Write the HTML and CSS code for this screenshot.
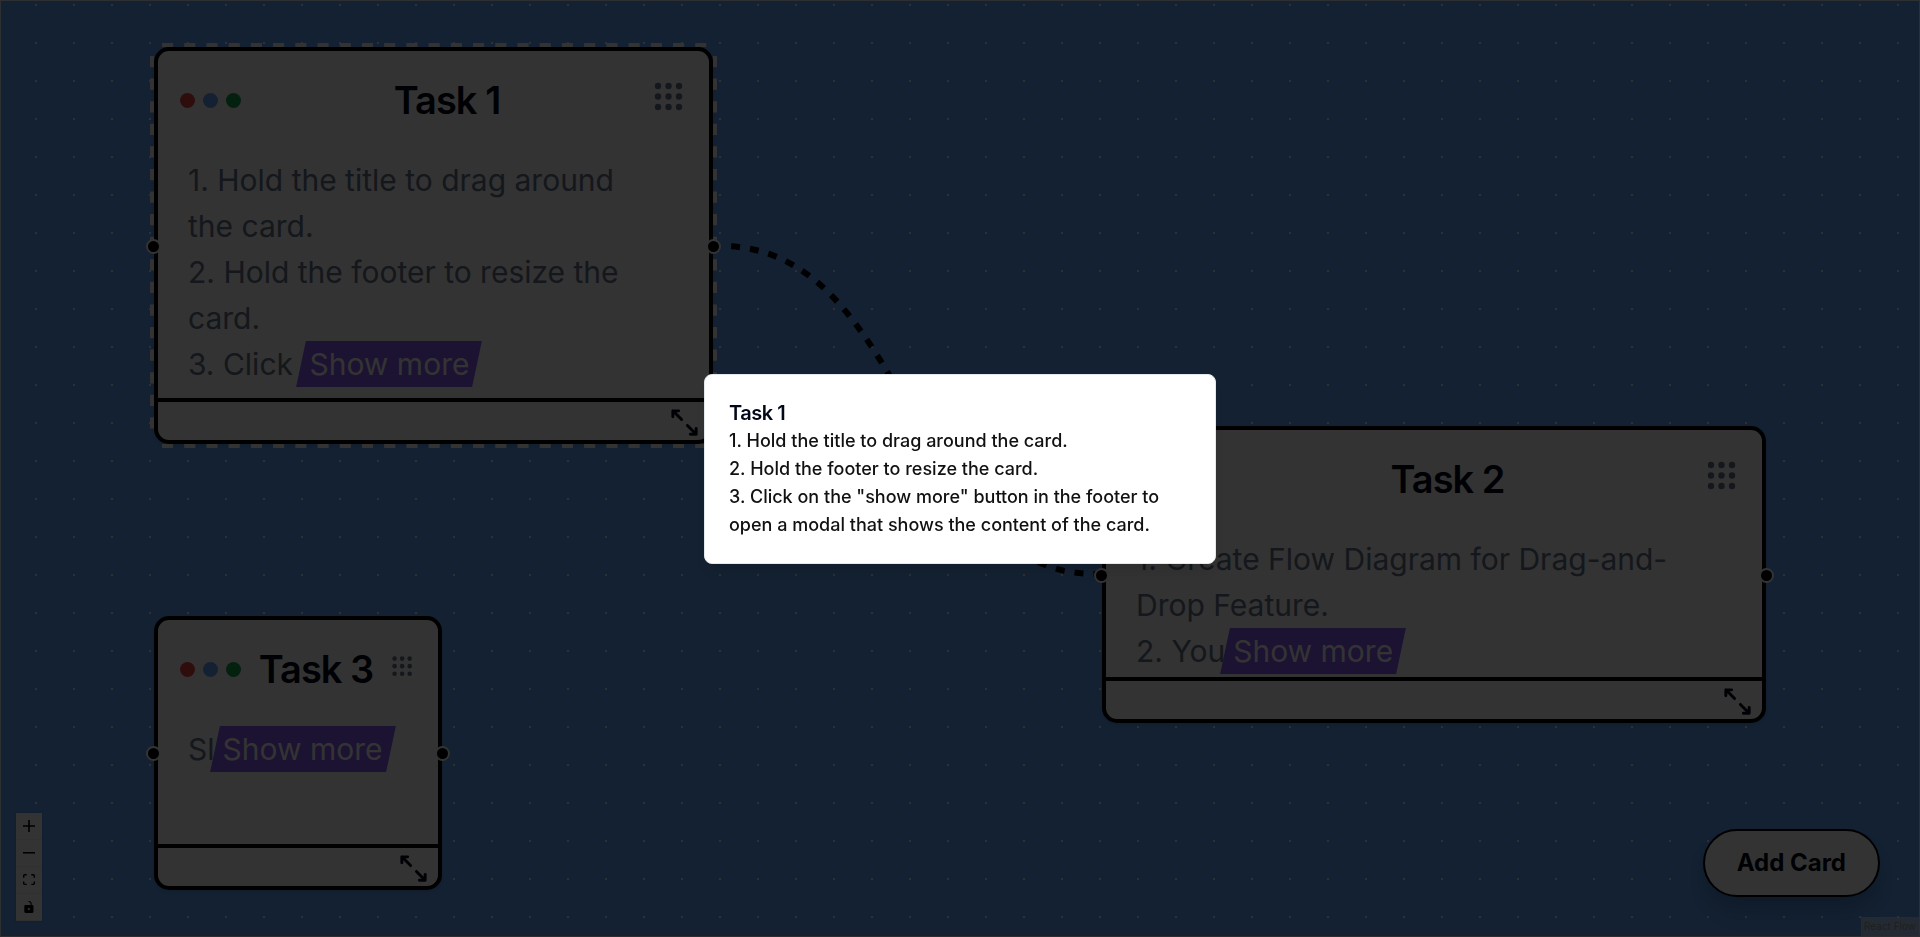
FILE: index.html
```html
<!DOCTYPE html>
<html lang="en">
<head>
<meta charset="utf-8">
<title>Task board</title>
<link rel="stylesheet" href="styles.css">
</head>
<body>
<svg class="sprite" aria-hidden="true">
  <symbol id="grip" viewBox="0 0 32 32">
    <g fill="currentColor"><circle cx="5" cy="5" r="3.2"/><circle cx="15.500" cy="5" r="3.2"/><circle cx="26" cy="5" r="3.2"/><circle cx="5" cy="15.500" r="3.2"/><circle cx="15.500" cy="15.500" r="3.2"/><circle cx="26" cy="15.500" r="3.2"/><circle cx="5" cy="26" r="3.2"/><circle cx="15.500" cy="26" r="3.2"/><circle cx="26" cy="26" r="3.2"/></g>
  </symbol>
  <symbol id="resize" viewBox="0 0 24 24">
    <path d="M16 20h4v-4M14 14l6 6M8 4H4v4M4 4l6 6" fill="none" stroke="currentColor" stroke-width="2" stroke-linecap="round" stroke-linejoin="round"/>
  </symbol>
</svg>

<main class="canvas">
  <svg class="edges" aria-hidden="true">
    <path d="M721 246C910 246 910 574 1095 574"/>
  </svg>

  <article class="card card-one">
    <svg class="selection" aria-hidden="true">
      <svg x="12" width="100%" height="100%" overflow="visible"><line class="dash-x" x1="0" y1="2" x2="96%" y2="2" pathLength="49"/></svg>
      <svg x="12" y="100%" width="100%" height="4" overflow="visible"><line class="dash-x" x1="0" y1="-2" x2="96%" y2="-2" pathLength="49"/></svg>
      <svg y="13" width="100%" height="100%" overflow="visible"><line class="dash-x" x1="2" y1="0" x2="2" y2="92%" pathLength="33"/></svg>
      <svg x="100%" y="13" width="4" height="100%" overflow="visible"><line class="dash-x" x1="-2" y1="0" x2="-2" y2="92%" pathLength="33"/></svg>
    </svg>
    <header class="card-head">
      <div class="lights"><span class="light red"></span><span class="light blue"></span><span class="light green"></span></div>
      <h2 class="card-title">Task 1</h2>
      <button class="grip" aria-label="Card menu"><svg><use href="#grip"/></svg></button>
    </header>
    <p class="card-text">1. Hold the title to drag around the card.<br>2. Hold the footer to resize the card.<br>3. Click <button class="more">Show more</button></p>
    <footer class="card-foot"><button class="resize" aria-label="Resize"><svg><use href="#resize"/></svg></button></footer>
    <span class="handle in"></span><span class="handle out"></span>
  </article>

  <article class="card card-two">
    <header class="card-head">
      <div class="lights"><span class="light red"></span><span class="light blue"></span><span class="light green"></span></div>
      <h2 class="card-title">Task 2</h2>
      <button class="grip" aria-label="Card menu"><svg><use href="#grip"/></svg></button>
    </header>
    <p class="card-text">1. Create Flow Diagram for Drag-and-Drop Feature.<br>2. You<button class="more">Show more</button></p>
    <footer class="card-foot"><button class="resize" aria-label="Resize"><svg><use href="#resize"/></svg></button></footer>
    <span class="handle in"></span><span class="handle out"></span>
  </article>

  <article class="card card-three">
    <header class="card-head">
      <div class="lights"><span class="light red"></span><span class="light blue"></span><span class="light green"></span></div>
      <h2 class="card-title">Task 3</h2>
      <button class="grip small" aria-label="Card menu"><svg><use href="#grip"/></svg></button>
    </header>
    <p class="card-text">Sl<button class="more">Show more</button></p>
    <footer class="card-foot"><button class="resize" aria-label="Resize"><svg><use href="#resize"/></svg></button></footer>
    <span class="handle in"></span><span class="handle out"></span>
  </article>

  <div class="controls">
    <button aria-label="Zoom in"><svg viewBox="0 0 32 32"><path d="M32 18.133H18.133V32h-4.266V18.133H0v-4.266h13.867V0h4.266v13.867H32z"/></svg></button>
    <button aria-label="Zoom out"><svg viewBox="0 0 32 5"><path d="M0 0h32v4.2H0z"/></svg></button>
    <button aria-label="Fit view"><svg viewBox="0 0 32 30"><path d="M3.692 4.63c0-.53.4-.938.939-.938h5.215V0H4.708C2.13 0 0 2.054 0 4.63v5.216h3.692V4.631zM27.354 0h-5.2v3.692h5.17c.53 0 .984.4.984.939v5.215H32V4.631A4.624 4.624 0 0027.354 0zm.954 24.83c0 .532-.4.94-.939.94h-5.215v3.768h5.215c2.577 0 4.631-2.13 4.631-4.707v-5.139h-3.692v5.139zm-23.677.94c-.531 0-.939-.4-.939-.94v-5.138H0v5.139c0 2.577 2.13 4.707 4.708 4.707h5.138V25.77H4.631z"/></svg></button>
    <button aria-label="Toggle interactivity"><svg viewBox="0 0 25 32"><path d="M21.333 10.667H19.81V7.619C19.81 3.429 16.38 0 12.19 0c-4.114 1.828-1.37 2.133.305 2.438 1.676.305 4.42 2.59 4.42 5.181v3.048H3.047A3.056 3.056 0 000 13.714v15.238A3.056 3.056 0 003.048 32h18.285a3.056 3.056 0 003.048-3.048V13.714a3.056 3.056 0 00-3.048-3.047zM12.19 24.533a3.056 3.056 0 01-3.047-3.047 3.056 3.056 0 013.047-3.048 3.056 3.056 0 013.048 3.048 3.056 3.056 0 01-3.048 3.047z"/></svg></button>
  </div>

  <button class="add">Add Card</button>
  <a class="attribution" href="#">React Flow</a>
</main>

<div class="overlay">
  <section class="dialog" role="dialog" aria-modal="true" aria-labelledby="dialog-title">
    <h2 id="dialog-title">Task 1</h2>
    <p>1. Hold the title to drag around the card.<br>2. Hold the footer to resize the card.<br>3. Click on the "show more" button in the footer to open a modal that shows the content of the card.</p>
  </section>
</div>
</body>
</html>
```
FILE: styles.css
```css
* { box-sizing: border-box; }

body {
  margin: 0;
  font-family: Inter, "Open Sans", sans-serif;
  color: #020817;
}

button {
  margin: 0;
  padding: 0;
  border: 0;
  background: none;
  font: inherit;
  color: inherit;
}

svg { display: block; }
h2, p { margin: 0; }
.sprite { position: absolute; width: 0; height: 0; }

.canvas {
  position: relative;
  height: 100vh;
  overflow: hidden;
  border: 1px solid #e2e8f0;
  background: #60a5fa radial-gradient(circle, #eef0f4 1px, transparent 1px) 16px -15px / 38px 38px;
}

.edges {
  position: absolute;
  inset: -1px;
  width: 100%;
  height: 100%;
  fill: none;
  stroke: #000;
  stroke-width: 6;
  stroke-dasharray: 9 10;
  stroke-dashoffset: -10;
}

/* Cards */
.card {
  position: absolute;
  display: flex;
  flex-direction: column;
  border: 4px solid #000;
  border-radius: 15px;
  background: #fff;
  box-shadow: 0 2px 4px rgba(0, 0, 0, .1);
}
.card-one { left: 153px; top: 46px; width: 559px; height: 397px; }
.card-two { left: 1101px; top: 425px; width: 664px; height: 297px; }
.card-three { left: 153px; top: 615px; width: 288px; height: 274px; }

.selection {
  position: absolute;
  inset: -8px;
  width: calc(100% + 16px);
  height: calc(100% + 16px);
}
.dash-x { stroke: #fff; stroke-width: 4; stroke-dasharray: 1 1; }

.card-head {
  display: flex;
  align-items: center;
  justify-content: space-between;
  height: 98px;
  padding: 0 24px 0 22px;
}
.lights { display: flex; gap: 8px; }
.light { width: 15px; height: 15px; border-radius: 50%; }
.red { background: #ef4444; }
.blue { background: #60a5fa; }
.green { background: #16a34a; }

.card-title {
  font-size: 38px;
  line-height: 46px;
  font-weight: 600;
  letter-spacing: -0.025em;
}

.grip { padding-bottom: 6px; color: #64748b; }
.grip svg { width: 32px; height: 32px; }
.grip.small svg { width: 23px; height: 23px; }

.card-text {
  flex: 1;
  padding: 8px 46px 0 30px;
  font-size: 30px;
  line-height: 46px;
  color: #64748b;
}

.more {
  position: relative;
  z-index: 0;
  padding: 0 8px;
  line-height: 46px;
  vertical-align: baseline;
  white-space: nowrap;
  color: #fff;
}
.more::before {
  content: "";
  position: absolute;
  z-index: -1;
  inset: 0;
  background: #8b5cf6;
  transform: skewX(-12deg);
}

.card-foot {
  display: flex;
  justify-content: flex-end;
  height: 42px;
  padding: 3px 7px 0;
  border-top: 4px solid #000;
}
.resize svg { width: 35px; height: 35px; }

.handle {
  position: absolute;
  top: 50%;
  width: 15px;
  height: 15px;
  margin-top: -7px;
  border: 2px solid #fff;
  border-radius: 50%;
  background: #000;
}
.in { left: -12px; }
.out { right: -12px; }

/* Canvas widgets */
.controls {
  position: absolute;
  left: 15px;
  bottom: 15px;
  display: flex;
  flex-direction: column;
  box-shadow: 0 0 2px 1px rgba(0, 0, 0, .08);
}
.controls button {
  display: grid;
  place-items: center;
  width: 26px;
  height: 27px;
  border-bottom: 1px solid #eee;
  background: #fefefe;
}
.controls svg { width: 12px; max-height: 12px; }

.add {
  position: absolute;
  right: 39px;
  bottom: 39px;
  padding: 16px 32px;
  border: 2px solid #000;
  border-radius: 34px;
  background: #fff;
  box-shadow: 0 10px 15px rgba(0, 0, 0, .1), 0 20px 30px rgba(0, 0, 0, .1);
  font-size: 24px;
  line-height: 32px;
  font-weight: 700;
}

.attribution {
  position: absolute;
  right: 0;
  bottom: 0;
  padding: 2px 3px;
  background: rgba(255, 255, 255, .5);
  font-size: 10px;
  line-height: 15px;
  color: #999;
  text-decoration: none;
}

/* Dialog */
.overlay {
  position: fixed;
  inset: 0;
  display: grid;
  place-items: center;
  background: rgba(0, 0, 0, .8);
}
.dialog {
  width: 512px;
  padding: 24px;
  border: 1px solid #e2e8f0;
  border-radius: 8px;
  background: #fff;
  box-shadow: 0 10px 15px rgba(0, 0, 0, .1);
}
.dialog h2 {
  font-size: 20px;
  line-height: 28px;
  font-weight: 600;
  letter-spacing: -0.025em;
}
.dialog p {
  font-size: 18px;
  line-height: 28px;
  font-weight: 500;
  color: #111;
}
```
